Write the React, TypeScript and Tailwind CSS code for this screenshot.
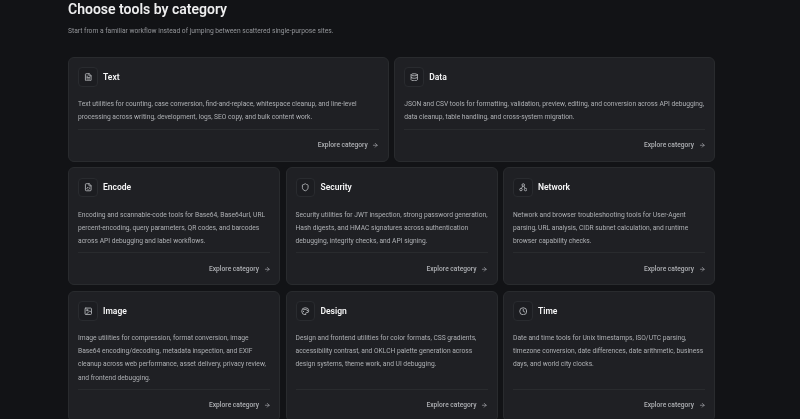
import React from "react";
import { FileText, Database, FileCode, Shield, Image as ImageIcon, Palette, Clock, ArrowRight } from "lucide-react";

type IconProps = { className?: string; strokeWidth?: number };
type Cat = { name: string; desc: string[]; Icon: React.ComponentType<IconProps>; span: string; h: string };

function NodesIcon({ className, strokeWidth = 2 }: IconProps) {
  return (
    <svg viewBox="0 0 24 24" fill="none" stroke="currentColor" strokeWidth={strokeWidth} className={className}>
      <circle cx="12" cy="5.5" r="3.5" />
      <circle cx="5.5" cy="18.5" r="3.5" />
      <circle cx="18.5" cy="18.5" r="3.5" />
      <path d="M10.4 8.6 7.1 15.4M13.6 8.6l3.3 6.8" />
    </svg>
  );
}

const cats: Cat[] = [
  { name: "Text", Icon: FileText, span: "col-span-3", h: "h-[105px]", desc: ["Text utilities for counting, case conversion, find-and-replace, whitespace cleanup, and line-level", "processing across writing, development, logs, SEO copy, and bulk content work."] },
  { name: "Data", Icon: Database, span: "col-span-3", h: "h-[105px]", desc: ["JSON and CSV tools for formatting, validation, preview, editing, and conversion across API debugging,", "data cleanup, table handling, and cross-system migration."] },
  { name: "Encode", Icon: FileCode, span: "col-span-2", h: "h-[118px]", desc: ["Encoding and scannable-code tools for Base64, Base64url, URL", "percent-encoding, query parameters, QR codes, and barcodes", "across API debugging and label workflows."] },
  { name: "Security", Icon: Shield, span: "col-span-2", h: "h-[118px]", desc: ["Security utilities for JWT inspection, strong password generation,", "Hash digests, and HMAC signatures across authentication", "debugging, integrity checks, and API signing."] },
  { name: "Network", Icon: NodesIcon, span: "col-span-2", h: "h-[118px]", desc: ["Network and browser troubleshooting tools for User-Agent", "parsing, URL analysis, CIDR subnet calculation, and runtime", "browser capability checks."] },
  { name: "Image", Icon: ImageIcon, span: "col-span-2", h: "h-[131px]", desc: ["Image utilities for compression, format conversion, image", "Base64 encoding/decoding, metadata inspection, and EXIF", "cleanup across web performance, asset delivery, privacy review,", "and frontend debugging."] },
  { name: "Design", Icon: Palette, span: "col-span-2", h: "h-[131px]", desc: ["Design and frontend utilities for color formats, CSS gradients,", "accessibility contrast, and OKLCH palette generation across", "design systems, theme work, and UI debugging."] },
  { name: "Time", Icon: Clock, span: "col-span-2", h: "h-[131px]", desc: ["Date and time tools for Unix timestamps, ISO/UTC parsing,", "timezone conversion, date differences, date arithmetic, business", "days, and world city clocks."] },
];

function Card({ c }: { c: Cat }) {
  const Icon = c.Icon;
  return (
    <div className={`${c.span} ${c.h} flex flex-col rounded-[6px] border border-[#292b2e] bg-[#1f2024] px-[9px] pt-[9.5px]`}>
      <div className="flex items-center gap-[5.5px]">
        <div className="flex h-[19.5px] w-[19.5px] items-center justify-center rounded-[4px] border border-[#292b2f] bg-[#1c1d21]">
          <Icon className="h-[8.5px] w-[8.5px] text-[#b8babe]" strokeWidth={2.4} />
        </div>
        <span className="text-[8.5px] leading-[12px] font-semibold text-[#f5f5f6]">{c.name}</span>
      </div>
      <div className="mt-[11.5px] flex-1 text-[6.68px] leading-[13.2px] text-[#aeb0b4]">
        {c.desc.map((l) => (
          <div key={l} className="whitespace-nowrap">{l}</div>
        ))}
      </div>
      <div className="flex h-[32px] items-center justify-end gap-[4.5px] border-t border-[#292b2e] pt-[0.5px] text-[6.68px] font-medium text-[#aeb0b4]">
        <span>Explore category</span>
        <ArrowRight className="h-[6.5px] w-[6.5px] text-[#b8babe]" strokeWidth={2.2} />
      </div>
    </div>
  );
}

export default function App() {
  return (
    <div className="h-[419px] w-[800px] overflow-hidden bg-[#121316] font-['Roboto','Noto_Sans',sans-serif] blur-[0.25px]">
      <div className="ml-[68px] w-[647px]">
        <h2 className="text-[14px] leading-[19px] font-semibold text-[#eeeeef]">Choose tools by category</h2>
        <p className="mt-[7px] text-[6.7px] leading-[10px] text-[#939599]">Start from a familiar workflow instead of jumping between scattered single-purpose sites.</p>
        <div className="mt-[20.5px] grid grid-cols-6 gap-[5.5px]">
          {cats.map((c) => (
            <Card key={c.name} c={c} />
          ))}
        </div>
      </div>
    </div>
  );
}
